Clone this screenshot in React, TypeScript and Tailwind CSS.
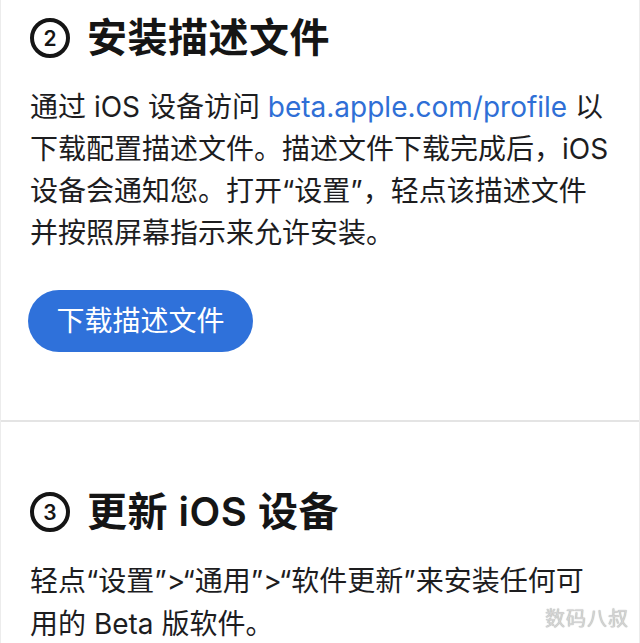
const font = { fontFamily: 'Inter, "Noto Sans CJK SC", sans-serif' };

function StepBadge({ n }: { n: string }) {
  return (
    <div className="w-10 h-10 rounded-full border-[4px] border-[#151515] flex items-center justify-center shrink-0">
      <span className="text-[21px] font-semibold leading-none text-[#151515]">{n}</span>
    </div>
  );
}

function StepHeading({ n, title }: { n: string; title: string }) {
  return (
    <div className="h-12 flex items-center gap-[17px]">
      <StepBadge n={n} />
      <h2 className="text-[40px] font-semibold leading-none tracking-[0.5px] text-[#151515]">{title}</h2>
    </div>
  );
}

export default function App() {
  return (
    <div
      className="relative w-[640px] h-[643px] overflow-hidden bg-white border-x border-[#ececec]"
      style={font}
    >
      {/* Step 2 */}
      <section className="pl-[29px] pt-[14px] pb-[68px] border-b-2 border-[#e4e4e4]">
        <StepHeading n="2" title="安装描述文件" />
        <p className="mt-6 text-[28px] leading-[42px] text-[#1d1d1f] whitespace-nowrap">
          通过 iOS 设备访问 <span className="text-[#2f6fd6]">beta.apple.com/profile</span> 以
          <br />
          下载配置描述文件。描述文件下载完成后，iOS
          <br />
          设备会通知您。打开“设置”，轻点该描述文件
          <br />
          并按照屏幕指示来允许安装。
        </p>
        <button className="mt-9 h-[62px] w-[225px] -ml-[2px] rounded-full bg-[#2f71da] text-white text-[28px] leading-none">
          下载描述文件
        </button>
      </section>

      {/* Step 3 */}
      <section className="pl-[29px] pt-[66px]">
        <StepHeading n="3" title="更新 iOS 设备" />
        <p className="mt-6 text-[28px] leading-[43px] text-[#1d1d1f] whitespace-nowrap">
          轻点“设置”&gt;“通用”&gt;“软件更新”来安装任何可
          <br />
          用的 Beta 版软件。
        </p>
      </section>

      {/* watermark */}
      <span
        className="absolute right-[10px] bottom-[14px] text-[20px] leading-none tracking-[1px] text-[#d4d4d4]"
        style={{ textShadow: "0 0 1px #9a9a9a" }}
      >
        数码八叔
      </span>
    </div>
  );
}
